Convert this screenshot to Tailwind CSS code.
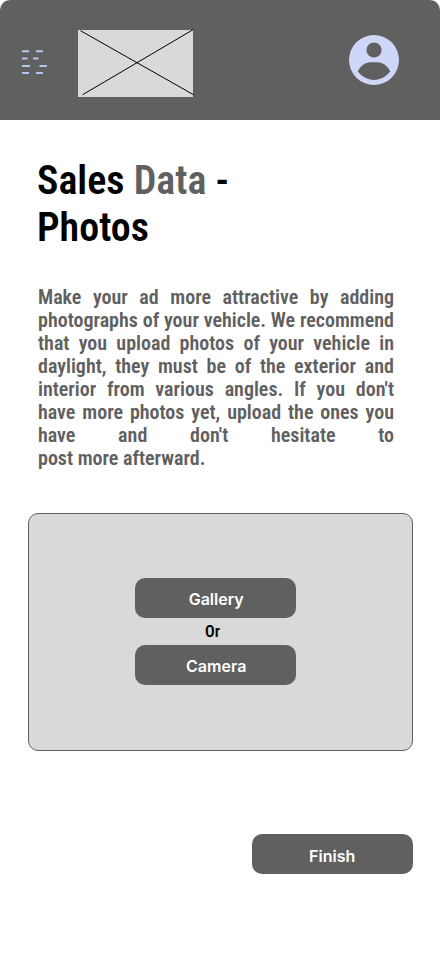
<!DOCTYPE html>
<html lang="en">
<head>
<meta charset="utf-8">
<title>Sales Data - Photos</title>
<script src="https://cdn.jsdelivr.net/npm/@tailwindcss/browser@4"></script>
</head>
<body class="bg-white">
<div class="w-[440px] h-[956px] overflow-hidden flex flex-col font-['Roboto_Condensed','Roboto',sans-serif]">
  <header class="h-[120px] shrink-0 bg-[#606060] rounded-t-[10px] flex items-start">
    <svg class="ml-[22px] mt-[50px] w-[26px] h-[25px]" viewBox="0 0 26 25" stroke="#b3c7f2" stroke-width="2" fill="none">
      <path d="M0 1.3H7M14 1.3H21M0 8.5H5.5M11 8.5H16.5M0 15.9H8M17.5 15.9H25M0 23.1H7M14 23.1H21"/>
    </svg>
    <svg class="ml-[30px] mt-[29px] w-[116px] h-[68px]" viewBox="0 0 116 68" fill="none">
      <rect y="1" width="115" height="67" fill="#d9d9d9"/>
      <path d="M2.5 1.7L115.5 65.7M4.7 65.7L115 .7" stroke="#000"/>
    </svg>
    <svg class="ml-[155px] mt-[35px] w-[50px] h-[50px]" viewBox="0 0 50 50">
      <circle cx="25" cy="25" r="25" fill="#ced6f9"/>
      <circle cx="25" cy="15" r="7.6" fill="#606060"/>
      <path d="M8.7 36.3C11.5 31 16 27.2 21.5 27.2H28.5C34 27.2 38.500 31 41.3 36.3C37.500 41.500 31.500 45 25 45S12.500 41.500 8.700 36.3Z" fill="#606060"/>
    </svg>
  </header>
  <main class="flex flex-col">
    <h1 class="ml-[37px] mt-[37px] w-[240px] text-[40px] leading-[47px] font-semibold [font-stretch:75%]">Sales <span class="text-[#606060]">Data</span> -<br>Photos</h1>
    <p class="ml-[38px] mt-[35px] w-[356px] text-[20px] leading-[23px] font-semibold text-[#606060] text-justify [font-stretch:75%]">Make your ad more attractive by adding photographs of your vehicle. We recommend that you upload photos of your vehicle in daylight, they must be of the exterior and interior from various angles. If you don't have more photos yet, upload the ones you have and don't hesitate to post&nbsp;more&nbsp;afterward.</p>
    <section class="ml-[28px] mt-[43px] w-[385px] h-[238px] border border-[#606060] rounded-[10px] bg-[#d9d9d9] flex flex-col items-start pl-[106px] pt-[64px]">
      <button class="w-[161.4px] h-[40px] rounded-[10px] bg-[#606060] text-white text-[16px] leading-[19px] font-semibold font-['Inter',sans-serif] pt-[3px] pl-[1px]">Gallery</button>
      <div class="w-[155px] h-[27px] text-center text-[16px] leading-[27px] font-semibold [font-stretch:75%]">Or</div>
      <button class="w-[161.4px] h-[40px] rounded-[10px] bg-[#606060] text-white text-[16px] leading-[19px] font-semibold font-['Inter',sans-serif] pt-[3px] pl-[1px]">Camera</button>
    </section>
    <button class="ml-[252px] mt-[83px] w-[161.4px] h-[40px] rounded-[10px] bg-[#606060] text-white text-[16px] leading-[19px] font-semibold font-['Inter',sans-serif] pt-[4px] pr-[1px]">Finish</button>
  </main>
</div>
</body>
</html>
